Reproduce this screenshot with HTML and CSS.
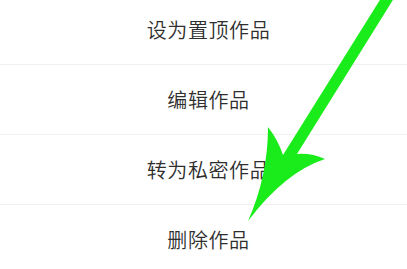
FILE: index.html
```html
<!DOCTYPE html>
<html lang="zh-CN">
<head>
<meta charset="utf-8">
<title>作品操作</title>
<link rel="stylesheet" href="styles.css">
</head>
<body>
<div class="sheet">
  <ul class="menu">
    <li class="item">设为置顶作品</li>
    <li class="item">编辑作品</li>
    <li class="item">转为私密作品</li>
    <li class="item">删除作品</li>
  </ul>
  <svg class="arrow" width="407" height="269" viewBox="0 0 407 269" aria-hidden="true">
    <path d="M383 -5 L396 -5 L297 154 Q312 153 325 159 Q285 172 248 221 Q268 176 268 127 Q278 140 283 155 Z" fill="#1aeb1a"/>
  </svg>
</div>
</body>
</html>
```
FILE: styles.css
```css
html, body {
  margin: 0;
  padding: 0;
  background: #ffffff;
}
.sheet {
  position: relative;
  width: 407px;
  height: 269px;
  overflow: hidden;
  font-family: "Noto Sans CJK SC", "Noto Sans", sans-serif;
}
.menu {
  list-style: none;
  margin: -5px 0 0 0;
  padding: 0 0 0 10px;
}
.item {
  height: 69px;
  display: flex;
  align-items: center;
  justify-content: center;
  border-bottom: 1px solid #f1f1f1;
  margin-left: -10px;
  padding-left: 10px;
  font-size: 20px;
  font-weight: 350;
  color: #2e2e2e;
  letter-spacing: 0.6px;
}
.arrow {
  position: absolute;
  left: 0;
  top: 0;
}
```
